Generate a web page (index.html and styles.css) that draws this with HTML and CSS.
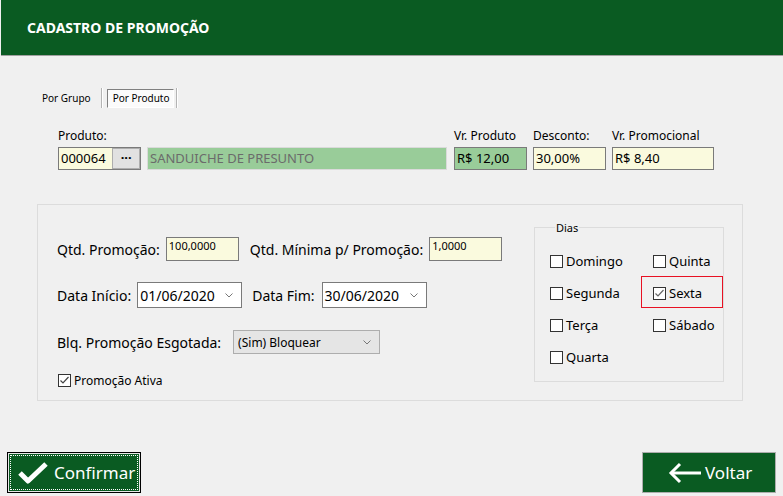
FILE: index.html
```html
<!DOCTYPE html>
<html lang="pt-BR">
<head>
    <meta charset="UTF-8">
    <title>Cadastro de Promoção</title>
    <link rel="stylesheet" href="styles.css">
</head>
<body>
    <header class="topbar">
        <h1>CADASTRO DE PROMOÇÃO</h1>
    </header>

    <div class="tabs">
        <span class="tab">Por Grupo</span>
        <span class="tab-sep"></span>
        <span class="tab active">Por Produto</span>
        <span class="tab-sep"></span>
    </div>

    <div class="product-row">
        <div class="field">
            <div class="caption">Produto:</div>
            <div class="code-box">
                <span class="code">000064</span>
                <span class="dots">···</span>
            </div>
        </div>
        <div class="field">
            <div class="caption"></div>
            <div class="box name">SANDUICHE DE PRESUNTO</div>
        </div>
        <div class="field push">
            <div class="caption">Vr. Produto</div>
            <div class="box price">R$ 12,00</div>
        </div>
        <div class="field">
            <div class="caption">Desconto:</div>
            <div class="box yellow w73">30,00%</div>
        </div>
        <div class="field">
            <div class="caption">Vr. Promocional</div>
            <div class="box yellow w102">R$ 8,40</div>
        </div>
    </div>

    <div class="group">
        <div class="fields">
            <div class="row row-qtd">
                <span class="lbl">Qtd. Promoção:</span>
                <span class="num">100,0000</span>
                <span class="lbl gap">Qtd. Mínima p/ Promoção:</span>
                <span class="num">1,0000</span>
            </div>
            <div class="row row-data">
                <span class="lbl">Data Início:</span>
                <span class="date">01/06/2020
                    <svg class="chev" width="8" height="5" viewBox="0 0 8 5"><polyline points="0.5,0.5 4,4 7.5,0.5" fill="none" stroke="#777" stroke-width="1"/></svg>
                </span>
                <span class="lbl gap">Data Fim:</span>
                <span class="date">30/06/2020
                    <svg class="chev" width="8" height="5" viewBox="0 0 8 5"><polyline points="0.5,0.5 4,4 7.5,0.5" fill="none" stroke="#777" stroke-width="1"/></svg>
                </span>
            </div>
            <div class="row row-blq">
                <span class="lbl">Blq. Promoção Esgotada:</span>
                <span class="combo">(Sim) Bloquear
                    <svg class="chev" width="8" height="5" viewBox="0 0 8 5"><polyline points="0.5,0.5 4,4 7.5,0.5" fill="none" stroke="#777" stroke-width="1"/></svg>
                </span>
            </div>
            <div class="row row-ativa">
                <span class="check on"><svg width="11" height="11" viewBox="0 0 11 11"><polyline points="1.5,5.5 4,8 9.5,2" fill="none" stroke="#444" stroke-width="1.2"/></svg></span>
                <span class="check-text">Promoção Ativa</span>
            </div>
        </div>

        <fieldset class="dias">
            <legend>Dias</legend>
            <div class="day"><span class="check"></span>Domingo</div>
            <div class="day"><span class="check"></span>Quinta</div>
            <div class="day"><span class="check"></span>Segunda</div>
            <div class="day marked"><span class="check on"><svg width="11" height="11" viewBox="0 0 11 11"><polyline points="1.5,5.5 4,8 9.5,2" fill="none" stroke="#666" stroke-width="1.2"/></svg></span>Sexta</div>
            <div class="day"><span class="check"></span>Terça</div>
            <div class="day"><span class="check"></span>Sábado</div>
            <div class="day"><span class="check"></span>Quarta</div>
        </fieldset>
    </div>

    <div class="actions">
        <button class="btn confirm">
            <svg width="32" height="24" viewBox="0 0 32 24"><polyline points="3,12 11,20 29,3" fill="none" stroke="#fff" stroke-width="5" stroke-linejoin="round"/></svg>
            Confirmar
        </button>
        <button class="btn back">
            <svg width="34" height="22" viewBox="0 0 34 22"><polyline points="12,2 3,11 12,20" fill="none" stroke="#fff" stroke-width="3"/><line x1="4" y1="11" x2="33" y2="11" stroke="#fff" stroke-width="3"/></svg>
            Voltar
        </button>
    </div>
</body>
</html>
```

FILE: styles.css
```css
body {
    margin: 0;
    background-color: #f0f0f0;
    font-family: "Noto Sans", "Open Sans", sans-serif;
    color: #000;
    width: 783px;
    height: 496px;
    overflow: hidden;
}

.topbar {
    height: 55px;
    margin-left: 1px;
    background-color: #0a5b22;
    border-bottom: 1px solid #a0a0a0;
}

.topbar h1 {
    margin: 0;
    padding-left: 26px;
    font-size: 14px;
    line-height: 56px;
    color: #fff;
    font-weight: bold;
}

/* tabs */
.tabs {
    display: flex;
    align-items: center;
    height: 20px;
    margin-top: 32px;
    padding-left: 42px;
    font-size: 10px;
}

.tab-sep {
    width: 1px;
    height: 20px;
    background: #b4b4b4;
    border-right: 1px solid #fff;
    margin: 0 4px 0 10px;
}

.tab.active {
    height: 17px;
    line-height: 17px;
    padding: 0 4px 0 5px;
    border-top: 1px solid #808080;
    border-left: 1px solid #808080;
    border-right: 1px solid #fff;
    border-bottom: 1px solid #fff;
    background: #fbfbfb;
}

.tab.active + .tab-sep {
    margin-left: 2px;
}

/* produto */
.product-row {
    display: flex;
    gap: 6px;
    margin-top: 19px;
    padding-left: 58px;
    font-size: 12px;
}

.field.push {
    margin-left: 1px;
}

.caption {
    height: 20px;
    line-height: 18px;
    color: #000;
}

.code-box {
    display: flex;
    width: 81px;
    height: 21px;
    border: 1px solid #7a7a7a;
    background: #fafade;
}

.code {
    width: 52px;
    padding-left: 2px;
    line-height: 21px;
    font-size: 13px;
}

.dots {
    width: 26px;
    height: 19px;
    border: 1px solid #adadad;
    background: #e1e1e1;
    text-align: center;
    line-height: 17px;
    font-weight: bold;
    font-size: 13px;
}

.box {
    height: 21px;
    line-height: 21px;
    padding-left: 2px;
    font-size: 13px;
    border: 1px solid #7a7a7a;
    box-sizing: content-box;
}

.box.name {
    width: 296px;
    background: #99cc99;
    border-color: #dadada;
    color: #6b6b6b;
}

.box.price {
    width: 69px;
    background: #99cc99;
}

.yellow {
    background: #fafade;
}

.w73 { width: 69px; }
.w102 { width: 98px; }

/* grupo */
.group {
    display: flex;
    width: 704px;
    height: 195px;
    margin: 34px 0 0 37px;
    border: 1px solid #dcdcdc;
}

.fields {
    flex: 1;
    padding: 32px 0 0 19px;
}

.row {
    display: flex;
    align-items: center;
}

.lbl {
    font-size: 14px;
    margin-right: 6px;
}

.lbl.gap {
    margin-left: 11px;
}

.num {
    width: 69px;
    height: 22px;
    padding-left: 2px;
    border: 1px solid #7a7a7a;
    background: #fafade;
    font-size: 11px;
    line-height: 16px;
}

.row-data {
    margin-top: 21px;
}

.row-data .lbl {
    margin-right: 6px;
}

.row-data .lbl.gap {
    margin-left: 10px;
    margin-right: 7px;
}

.date {
    display: flex;
    align-items: center;
    justify-content: space-between;
    height: 24px;
    padding: 0 8px 0 2px;
    border: 1px solid #7a7a7a;
    background: #fff;
    font-size: 14px;
    width: 93px;
}

.row-blq {
    margin-top: 22px;
}

.row-blq .lbl {
    margin-right: 12px;
}

.combo {
    display: flex;
    align-items: center;
    justify-content: space-between;
    width: 133px;
    height: 22px;
    padding: 0 8px 0 4px;
    border: 1px solid #adadad;
    background: #e5e5e5;
    font-size: 12px;
}

.row-ativa {
    margin-top: 18px;
    margin-left: 1px;
    font-size: 12px;
}

.check {
    display: inline-flex;
    align-items: center;
    justify-content: center;
    width: 11px;
    height: 11px;
    border: 1px solid #333;
    background: #fff;
    margin-right: 3px;
    flex: none;
}

/* dias */
.dias {
    width: 173px;
    height: 150px;
    margin: 15px 18px 0 0;
    padding: 10px 0 0 15px;
    border: 1px solid #dcdcdc;
    display: grid;
    grid-template-columns: 103px 1fr;
    grid-auto-rows: 32px;
    align-content: start;
    font-size: 13px;
}

.dias legend {
    font-size: 11px;
    padding: 0 1px;
    margin-left: 5px;
}

.day {
    position: relative;
    display: flex;
    align-items: center;
}

.day.marked::after {
    content: "";
    position: absolute;
    left: -12px;
    top: -1px;
    width: 80px;
    height: 30px;
    border: 1px solid #e81123;
}

/* botões */
.actions {
    display: flex;
    justify-content: space-between;
    padding: 0 7px;
    margin-top: 51px;
}

.btn {
    display: flex;
    align-items: center;
    width: 134px;
    height: 41px;
    padding: 0;
    background-color: #0a5b22;
    color: #fff;
    font-family: "Noto Sans", sans-serif;
    font-size: 17px;
    cursor: pointer;
}

.btn.confirm {
    border: 1px solid #000;
    box-shadow: inset 0 0 0 1px #e8e8e8;
    outline: 1px dotted #fff;
    outline-offset: -4px;
    padding-left: 9px;
    gap: 5px;
}

.btn.back {
    border: 1px solid #adadad;
    padding-left: 25px;
    gap: 3px;
}
```
